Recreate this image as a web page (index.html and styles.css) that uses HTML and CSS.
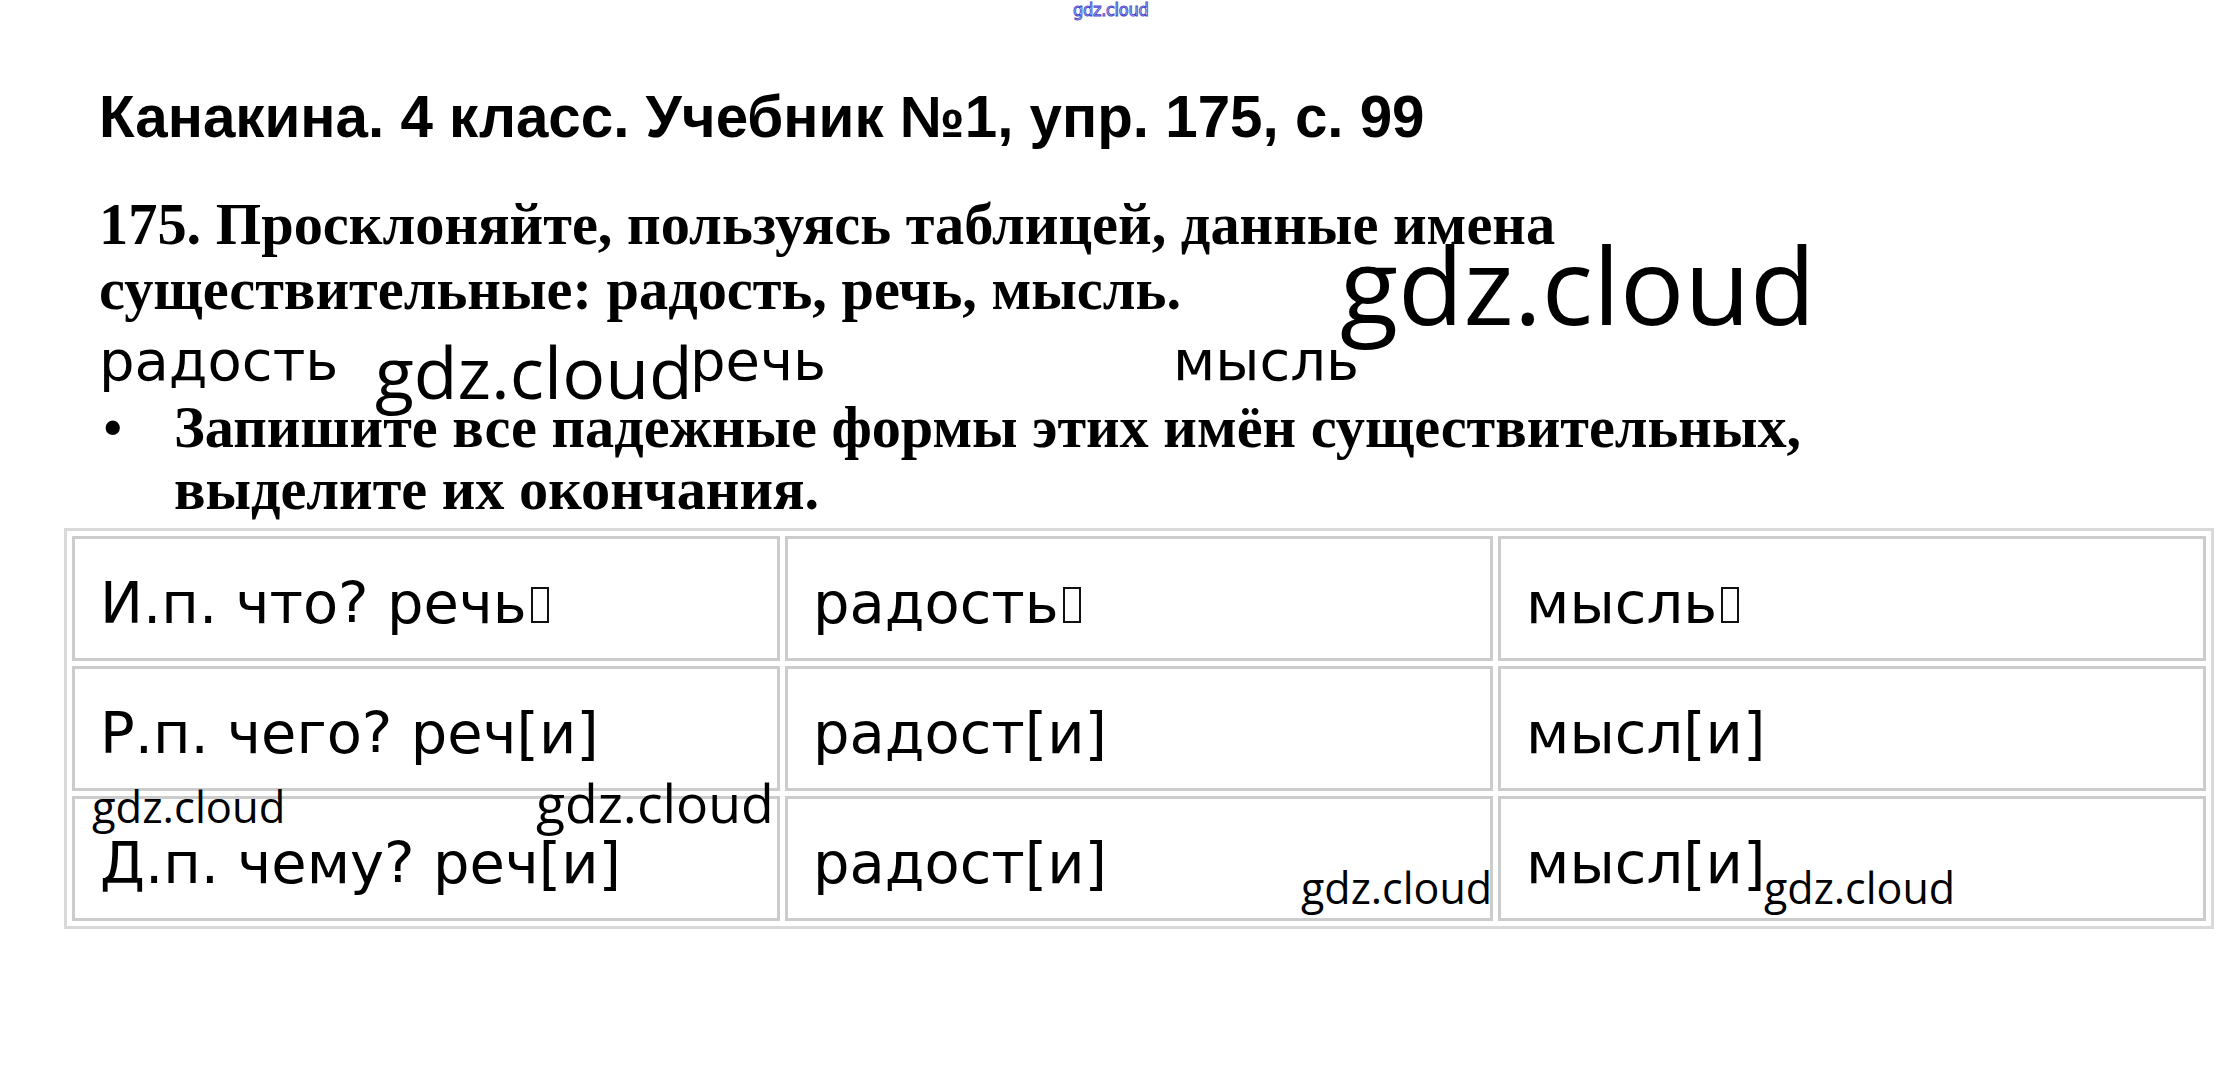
FILE: index.html
```html
<!DOCTYPE html>
<html lang="ru">
<head>
<meta charset="utf-8">
<title>Канакина. 4 класс. Учебник №1, упр. 175, с. 99</title>
<link rel="stylesheet" href="styles.css">
</head>
<body>
<div class="page">
  <div class="wm wm-top">gdz.cloud</div>
  <h1 class="title">Канакина. 4 класс. Учебник №1, упр. 175, с. 99</h1>
  <p class="task">175. Просклоняйте, пользуясь таблицей, данные имена<br>существительные: радость, речь, мысль.</p>
  <div class="words"><span class="w w1">радость</span><span class="w w2">речь</span><span class="w w3">мысль</span></div>
  <div class="bullet-item"><span class="bullet">•</span><span class="btext">Запишите все падежные формы этих имён существительных,<br>выделите их окончания.</span></div>
  <table class="cases">
    <tr><td>И.п. что? речь<span class="tofu"></span></td><td>радость<span class="tofu"></span></td><td>мысль<span class="tofu"></span></td></tr>
    <tr><td>Р.п. чего? реч[и]</td><td>радост[и]</td><td>мысл[и]</td></tr>
    <tr><td>Д.п. чему? реч[и]</td><td>радост[и]</td><td>мысл[и]</td></tr>
  </table>
  <div class="wm wm-mid">gdz.cloud</div>
  <div class="wm wm-big">gdz.cloud</div>
  <div class="wm wm-t1">gdz.cloud</div>
  <div class="wm wm-t2">gdz.cloud</div>
  <div class="wm wm-t3">gdz.cloud</div>
  <div class="wm wm-t4">gdz.cloud</div>
</div>
</body>
</html>
```

FILE: styles.css
```css
html, body {
  margin: 0;
  padding: 0;
  background: #ffffff;
}

.page {
  position: relative;
  width: 2222px;
  height: 1066px;
  box-sizing: border-box;
  padding: 84px 0 0 99px;
  color: #000;
  overflow: hidden;
}

.title {
  margin: 0;
  font-family: "Liberation Sans", Arial, sans-serif;
  font-weight: bold;
  font-size: 58.3px;
  line-height: 66px;
  white-space: nowrap;
}

.task {
  margin: 42px 0 0 0;
  font-family: "Liberation Serif", "Times New Roman", serif;
  font-weight: bold;
  font-size: 58.4px;
  line-height: 65px;
  white-space: nowrap;
}

.words {
  margin-top: 6px;
  display: flex;
  font-family: "DejaVu Sans", Verdana, sans-serif;
  font-size: 56px;
  line-height: 65px;
}

.w1 { width: 591px; }
.w2 { width: 483px; }

.bullet-item {
  margin-top: 4px;
  display: flex;
  align-items: flex-start;
  font-family: "Liberation Serif", "Times New Roman", serif;
  font-weight: bold;
  font-size: 58.3px;
  line-height: 62px;
  white-space: nowrap;
}

.bullet {
  width: 75px;
  flex: none;
  padding-left: 5px;
  box-sizing: border-box;
  font-family: "Liberation Sans", Arial, sans-serif;
  font-weight: bold;
  font-size: 50px;
  line-height: 60px;
}

.cases {
  margin: 7px 0 0 -35px;
  width: 2150px;
  table-layout: fixed;
  border-collapse: separate;
  border-spacing: 5px;
  border: 3px solid #d9d9d9;
  font-family: "DejaVu Sans", Verdana, sans-serif;
  font-size: 57.5px;
}

.cases tr {
  height: 125px;
}

.cases td {
  border: 3px solid #cccccc;
  padding: 10px 0 0 25px;
  vertical-align: middle;
  white-space: nowrap;
  line-height: 65px;
}

.tofu {
  display: inline-block;
  width: 18px;
  height: 36px;
  border: 2px solid #111;
  box-sizing: border-box;
  margin-left: 4px;
  vertical-align: baseline;
}

.wm {
  position: absolute;
  font-family: "Open Sans", sans-serif;
  line-height: 1;
  white-space: nowrap;
  color: #000;
}

.wm-top {
  left: 1073px;
  top: 1px;
  font-family: "DejaVu Sans Condensed", "DejaVu Sans", sans-serif;
  font-size: 18px;
  color: #ffffff;
  -webkit-text-stroke: 1px #4b4bd0;
  letter-spacing: -0.3px;
}

.wm-mid {
  left: 375px;
  top: 336px;
  font-size: 71.5px;
}

.wm-big {
  left: 1340px;
  top: 230px;
  font-size: 107px;
}

.wm-t1 {
  left: 92px;
  top: 785px;
  font-size: 43.5px;
}

.wm-t2 {
  left: 536px;
  top: 776px;
  font-size: 53.5px;
}

.wm-t3 {
  left: 1301px;
  top: 866px;
  font-size: 43px;
}

.wm-t4 {
  left: 1764px;
  top: 866px;
  font-size: 43px;
}
```
